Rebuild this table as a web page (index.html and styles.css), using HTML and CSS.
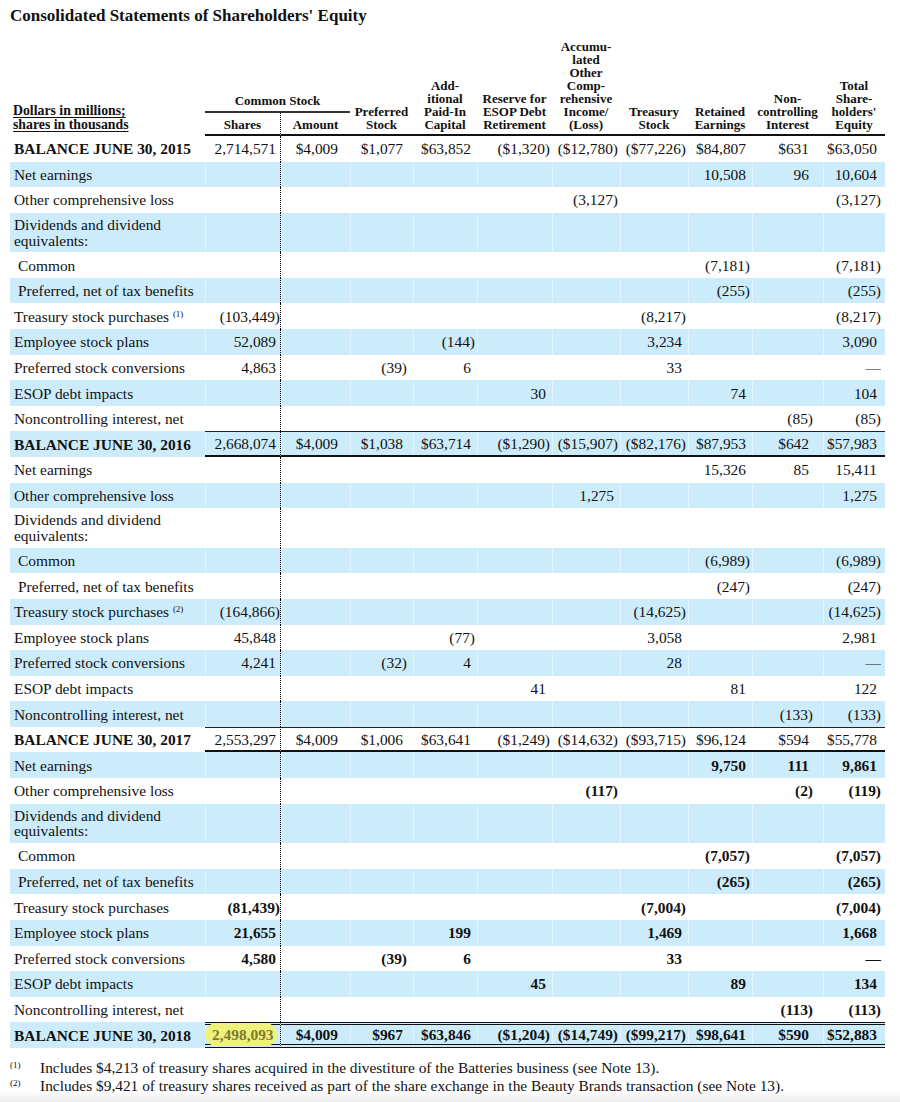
FILE: index.html
```html
<!DOCTYPE html>
<html lang="en">
<head>
<meta charset="utf-8">
<title>Consolidated Statements of Shareholders' Equity</title>
<link rel="stylesheet" href="styles.css">
</head>
<body>
<div class="page">
  <h1 class="title">Consolidated Statements of Shareholders' Equity</h1>
  <table class="eq">
    <colgroup>
      <col class="c-label"><col class="c-shares"><col class="c-amount"><col class="c-pref"><col class="c-apic"><col class="c-res"><col class="c-aoci"><col class="c-treas"><col class="c-ret"><col class="c-nci"><col class="c-total">
    </colgroup>
    <thead>
      <tr class="h1">
        <th rowspan="2" class="lbl"><span class="u">Dollars in millions;</span><br><span class="u">shares in thousands</span></th>
        <th colspan="2" class="grp">Common Stock</th>
        <th rowspan="2" class="hb">Preferred<br>Stock</th>
        <th rowspan="2" class="hb">Add-<br>itional<br>Paid-In<br>Capital</th>
        <th rowspan="2" class="hb">Reserve for<br>ESOP Debt<br>Retirement</th>
        <th rowspan="2" class="hb">Accumu-<br>lated<br>Other<br>Comp-<br>rehensive<br>Income/<br>(Loss)</th>
        <th rowspan="2" class="hb">Treasury<br>Stock</th>
        <th rowspan="2" class="hb">Retained<br>Earnings</th>
        <th rowspan="2" class="hb">Non-<br>controlling<br>Interest</th>
        <th rowspan="2" class="hb">Total<br>Share-<br>holders'<br>Equity</th>
      </tr>
      <tr class="h2">
        <th class="hb dot">Shares</th>
        <th class="hb">Amount</th>
      </tr>
    </thead>
    <tbody>
      <tr class="bal bal0"><td>BALANCE JUNE 30, 2015</td><td>2,714,571</td><td>$4,009</td><td>$1,077</td><td>$63,852</td><td class="n">($1,320)</td><td class="n">($12,780)</td><td class="n">($77,226)</td><td>$84,807</td><td>$631</td><td>$63,050</td></tr>
      <tr><td>Net earnings</td><td></td><td></td><td></td><td></td><td></td><td></td><td></td><td>10,508</td><td>96</td><td>10,604</td></tr>
      <tr><td>Other comprehensive loss</td><td></td><td></td><td></td><td></td><td></td><td class="n">(3,127)</td><td></td><td></td><td></td><td class="n">(3,127)</td></tr>
      <tr class="div"><td>Dividends and dividend<br>equivalents:</td><td></td><td></td><td></td><td></td><td></td><td></td><td></td><td></td><td></td><td></td></tr>
      <tr><td class="ind">Common</td><td></td><td></td><td></td><td></td><td></td><td></td><td></td><td class="n">(7,181)</td><td></td><td class="n">(7,181)</td></tr>
      <tr><td class="ind">Preferred, net of tax benefits</td><td></td><td></td><td></td><td></td><td></td><td></td><td></td><td class="n">(255)</td><td></td><td class="n">(255)</td></tr>
      <tr><td>Treasury stock purchases <sup class="fn">(1)</sup></td><td class="n">(103,449)</td><td></td><td></td><td></td><td></td><td></td><td class="n">(8,217)</td><td></td><td></td><td class="n">(8,217)</td></tr>
      <tr><td>Employee stock plans</td><td>52,089</td><td></td><td></td><td class="n">(144)</td><td></td><td></td><td>3,234</td><td></td><td></td><td>3,090</td></tr>
      <tr><td>Preferred stock conversions</td><td>4,863</td><td></td><td class="n">(39)</td><td>6</td><td></td><td></td><td>33</td><td></td><td></td><td class="n">—</td></tr>
      <tr><td>ESOP debt impacts</td><td></td><td></td><td></td><td></td><td>30</td><td></td><td></td><td>74</td><td></td><td>104</td></tr>
      <tr><td>Noncontrolling interest, net</td><td></td><td></td><td></td><td></td><td></td><td></td><td></td><td></td><td class="n">(85)</td><td class="n">(85)</td></tr>

      <tr class="bal"><td>BALANCE JUNE 30, 2016</td><td>2,668,074</td><td>$4,009</td><td>$1,038</td><td>$63,714</td><td class="n">($1,290)</td><td class="n">($15,907)</td><td class="n">($82,176)</td><td>$87,953</td><td>$642</td><td>$57,983</td></tr>
      <tr><td>Net earnings</td><td></td><td></td><td></td><td></td><td></td><td></td><td></td><td>15,326</td><td>85</td><td>15,411</td></tr>
      <tr><td>Other comprehensive loss</td><td></td><td></td><td></td><td></td><td></td><td>1,275</td><td></td><td></td><td></td><td>1,275</td></tr>
      <tr class="div"><td>Dividends and dividend<br>equivalents:</td><td></td><td></td><td></td><td></td><td></td><td></td><td></td><td></td><td></td><td></td></tr>
      <tr><td class="ind">Common</td><td></td><td></td><td></td><td></td><td></td><td></td><td></td><td class="n">(6,989)</td><td></td><td class="n">(6,989)</td></tr>
      <tr><td class="ind">Preferred, net of tax benefits</td><td></td><td></td><td></td><td></td><td></td><td></td><td></td><td class="n">(247)</td><td></td><td class="n">(247)</td></tr>
      <tr><td>Treasury stock purchases <sup class="fn">(2)</sup></td><td class="n">(164,866)</td><td></td><td></td><td></td><td></td><td></td><td class="n">(14,625)</td><td></td><td></td><td class="n">(14,625)</td></tr>
      <tr><td>Employee stock plans</td><td>45,848</td><td></td><td></td><td class="n">(77)</td><td></td><td></td><td>3,058</td><td></td><td></td><td>2,981</td></tr>
      <tr><td>Preferred stock conversions</td><td>4,241</td><td></td><td class="n">(32)</td><td>4</td><td></td><td></td><td>28</td><td></td><td></td><td class="n">—</td></tr>
      <tr><td>ESOP debt impacts</td><td></td><td></td><td></td><td></td><td>41</td><td></td><td></td><td>81</td><td></td><td>122</td></tr>
      <tr><td>Noncontrolling interest, net</td><td></td><td></td><td></td><td></td><td></td><td></td><td></td><td></td><td class="n">(133)</td><td class="n">(133)</td></tr>

      <tr class="bal"><td>BALANCE JUNE 30, 2017</td><td>2,553,297</td><td>$4,009</td><td>$1,006</td><td>$63,641</td><td class="n">($1,249)</td><td class="n">($14,632)</td><td class="n">($93,715)</td><td>$96,124</td><td>$594</td><td>$55,778</td></tr>
      <tr class="b"><td>Net earnings</td><td></td><td></td><td></td><td></td><td></td><td></td><td></td><td>9,750</td><td>111</td><td>9,861</td></tr>
      <tr class="b"><td>Other comprehensive loss</td><td></td><td></td><td></td><td></td><td></td><td class="n">(117)</td><td></td><td></td><td class="n">(2)</td><td class="n">(119)</td></tr>
      <tr class="b div"><td>Dividends and dividend<br>equivalents:</td><td></td><td></td><td></td><td></td><td></td><td></td><td></td><td></td><td></td><td></td></tr>
      <tr class="b"><td class="ind">Common</td><td></td><td></td><td></td><td></td><td></td><td></td><td></td><td class="n">(7,057)</td><td></td><td class="n">(7,057)</td></tr>
      <tr class="b"><td class="ind">Preferred, net of tax benefits</td><td></td><td></td><td></td><td></td><td></td><td></td><td></td><td class="n">(265)</td><td></td><td class="n">(265)</td></tr>
      <tr class="b"><td>Treasury stock purchases</td><td class="n">(81,439)</td><td></td><td></td><td></td><td></td><td></td><td class="n">(7,004)</td><td></td><td></td><td class="n">(7,004)</td></tr>
      <tr class="b"><td>Employee stock plans</td><td>21,655</td><td></td><td></td><td>199</td><td></td><td></td><td>1,469</td><td></td><td></td><td>1,668</td></tr>
      <tr class="b"><td>Preferred stock conversions</td><td>4,580</td><td></td><td class="n">(39)</td><td>6</td><td></td><td></td><td>33</td><td></td><td></td><td class="n">—</td></tr>
      <tr class="b"><td>ESOP debt impacts</td><td></td><td></td><td></td><td></td><td>45</td><td></td><td></td><td>89</td><td></td><td>134</td></tr>
      <tr class="b"><td>Noncontrolling interest, net</td><td></td><td></td><td></td><td></td><td></td><td></td><td></td><td></td><td class="n">(113)</td><td class="n">(113)</td></tr>
      <tr class="bal last b"><td>BALANCE JUNE 30, 2018</td><td><span class="hl">2,498,093</span></td><td>$4,009</td><td>$967</td><td>$63,846</td><td class="n">($1,204)</td><td class="n">($14,749)</td><td class="n">($99,217)</td><td>$98,641</td><td>$590</td><td>$52,883</td></tr>
    </tbody>
  </table>
  <div class="notes">
    <div class="note"><span class="mark">(1)</span><span>Includes $4,213 of treasury shares acquired in the divestiture of the Batteries business (see Note 13).</span></div>
    <div class="note"><span class="mark">(2)</span><span>Includes $9,421 of treasury shares received as part of the share exchange in the Beauty Brands transaction (see Note 13).</span></div>
  </div>
</div>
</body>
</html>
```

FILE: styles.css
```css
html {
  min-height: 1102px;
  background: linear-gradient(to bottom, #ffffff 0, #ffffff 1090px, #ececec 1102px);
}
body {
  margin: 0;
  font-family: "Liberation Serif", "Times New Roman", serif;
  color: #111;
}
.page {
  padding: 6px 10px 0;
}
.title {
  margin: 0 0 14px;
  font-size: 17px;
  line-height: 20px;
  font-weight: bold;
}
.eq {
  width: 875px;
  table-layout: fixed;
  border-collapse: separate;
  border-spacing: 0;
  font-size: 15.4px;
}
.c-label { width: 195px; }
.c-shares { width: 76px; }
.c-amount { width: 69px; }
.c-pref { width: 63px; }
.c-apic { width: 64px; }
.c-res { width: 75px; }
.c-aoci { width: 68px; }
.c-treas { width: 68px; }
.c-ret { width: 64px; }
.c-nci { width: 71px; }
.c-total { width: 62px; }

/* header */
.eq th {
  font-size: 13px;
  line-height: 13px;
  font-weight: bold;
  vertical-align: bottom;
  text-align: center;
  padding: 0 0 3px;
  white-space: nowrap;
}
.eq tr.h1 { height: 72px; }
.eq tr.h2 { height: 23px; }
.eq th.lbl {
  text-align: left;
  font-size: 13.8px;
  line-height: 14px;
  padding: 0 0 4px 3px;
}
.u {
  text-decoration: underline;
  text-decoration-thickness: 1px;
  text-underline-offset: 2px;
}
.eq th.grp {
  border-bottom: 2px solid #333;
  padding-bottom: 4px;
}
.eq th.hb {
  border-bottom: 2px solid #111;
}
.eq th.dot {
  border-right: 1px dotted #000;
}

/* body */
.eq tbody tr { height: 25.6px; }
.eq tbody tr.div { height: 39.5px; }
.eq td {
  padding: 0 calc(var(--p, 2px) + 4px) 0 0;
  line-height: 17px;
  vertical-align: middle;
  text-align: right;
  white-space: nowrap;
}
.eq td.n { padding-right: var(--p, 2px); }
.eq td:nth-child(1) {
  text-align: left;
  padding: 0 0 0 4px;
  white-space: normal;
}
.eq td:nth-child(2) { --p: 0px; border-right: 1px dotted #000; }
.eq td:nth-child(3) { --p: 8px; }
.eq td:nth-child(4) { --p: 6px; }
.eq td:nth-child(5) { --p: 2px; }
.eq td:nth-child(6) { --p: 2px; }
.eq td:nth-child(7) { --p: 2px; }
.eq td:nth-child(8) { --p: 2px; }
.eq td:nth-child(9) { --p: 2px; }
.eq td:nth-child(10) { --p: 10px; }
.eq td:nth-child(11) { --p: 4px; }

.eq td.ind { padding-left: 8px; }

.eq tbody tr:nth-child(even) td {
  background: #ccecfc;
}
.eq tbody tr:nth-child(even) td + td {
  box-shadow: inset 1px 0 0 #e2f4fd;
}
.eq tr.div td {
  line-height: 15.5px;
}

.eq tr.bal td:first-child { font-weight: bold; }
.eq tr.bal td + td {
  border-top: 1px solid #222;
  border-bottom: 2px solid #111;
}
.eq tr.bal0 td + td {
  border-top: 0;
  border-bottom: 0;
}
.eq tr.bal.last td + td {
  border-top: 3px double #111;
  border-bottom: 4px double #111;
}
.eq tr.b td + td { font-weight: bold; }

.fn {
  font-size: 9px;
  line-height: 0;
  vertical-align: 5px;
}
.hl {
  background: #eef27c;
  color: #7d7a2c;
  border-radius: 12px;
  padding: 3px 3px 3px 7px;
}

/* footnotes */
.notes {
  margin-top: 11px;
  font-size: 15.4px;
  line-height: 18px;
}
.note {
  display: flex;
}
.note .mark {
  width: 30px;
  flex: none;
  font-size: 9px;
  line-height: 12px;
  padding-left: 0;
}
```
